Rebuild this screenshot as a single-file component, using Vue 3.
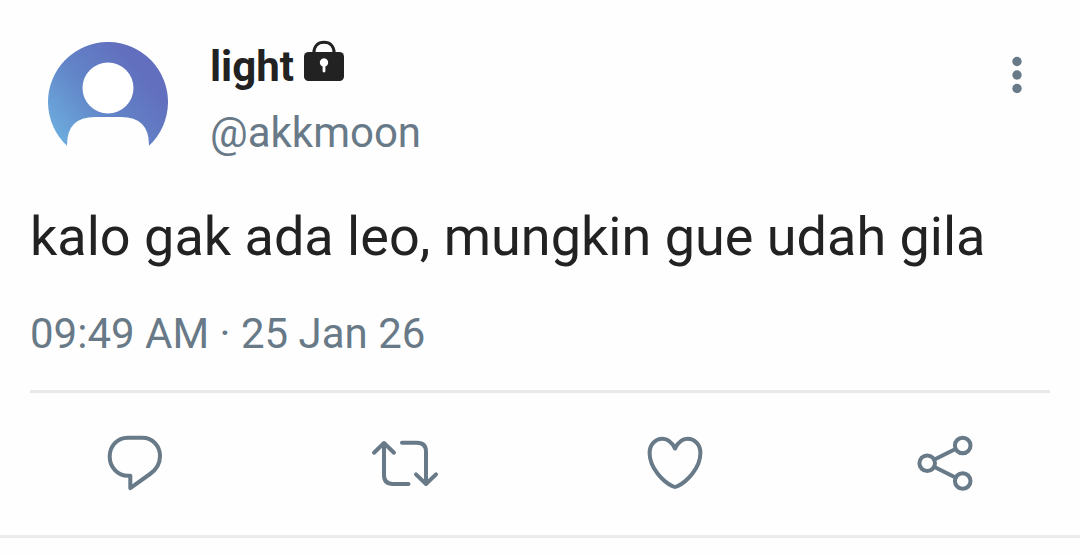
<script setup>
const post = {
  name: 'light',
  handle: '@akkmoon',
  text: 'kalo gak ada leo, mungkin gue udah gila',
  time: '09:49 AM · 25 Jan 26',
}

const actions = [
  {
    label: 'Reply',
    paths: [
      'M37.5 17.8H52.5C62.5 17.8 70 26 70 36C70 43.5 66.5 49.5 60 54L40.3 68.2V55.8H38C27.5 55.8 19.7 47 19.7 36.5C19.7 26 27.5 17.8 37.5 17.8Z',
    ],
  },
  {
    label: 'Repost',
    paths: [
      'M14 32.7L24 23L34 32.7M24 24V55Q24 64 33 64H48.5',
      'M42 22.8H57Q66 22.8 66 31.8V63M56 54.4L66 64L76 54.4',
    ],
  },
  {
    label: 'Like',
    paths: [
      'M45 28.5C42 22.5 37.5 18.8 32.5 18.8C25 18.8 19.6 25 19.6 33C19.6 48 33 61.5 42.6 66.3Q45 67.5 47.4 66.3C57 61.5 70.4 48 70.4 33C70.4 25 65 18.8 57.5 18.8C52.5 18.8 48 22.5 45 28.5Z',
    ],
  },
  {
    label: 'Share',
    paths: [
      'M34.5 39.5L55.5 29M34.5 47L55.5 57.5',
      'M19.4 43.2a7.8 7.8 0 1 0 15.6 0a7.8 7.8 0 1 0 -15.6 0Z',
      'M54.9 25.5a7.8 7.8 0 1 0 15.6 0a7.8 7.8 0 1 0 -15.6 0Z',
      'M54.9 61a7.8 7.8 0 1 0 15.6 0a7.8 7.8 0 1 0 -15.6 0Z',
    ],
  },
]
</script>

<template>
  <article class="post">
    <header class="head">
      <svg class="avatar" viewBox="0 0 120 120" aria-hidden="true">
        <defs>
          <linearGradient id="sky" x1="0" y1="0.8" x2="0.75" y2="0.25">
            <stop offset="0" stop-color="#6cabdd" />
            <stop offset="0.5" stop-color="#6285c8" />
            <stop offset="1" stop-color="#626fbe" />
          </linearGradient>
        </defs>
        <path d="M19 103.8A60 60 0 1 1 101 103.8V103Q101 75 73 75H47Q19 75 19 103Z" fill="url(#sky)" />
        <circle cx="60" cy="46" r="25.5" fill="#fff" />
      </svg>
      <div class="who">
        <div class="name">
          <span>{{ post.name }}</span>
          <svg class="lock" viewBox="0 0 40 42" aria-hidden="true">
            <path d="M9.8 13.5C9.8 6 14 2.2 20 2.2S30.2 6 30.2 13.5" fill="none" stroke="#222" stroke-width="3" />
            <rect y="12" width="40" height="29" rx="4.5" fill="#222" />
            <path d="M18.6 31.5V26.5A4.2 4.2 0 1 1 21.4 26.5V31.5Q20 33.5 18.6 31.5Z" fill="#fff" />
          </svg>
        </div>
        <div class="handle">{{ post.handle }}</div>
      </div>
      <button class="more" type="button" aria-label="More options">
        <svg viewBox="0 0 12 40" aria-hidden="true">
          <circle cx="6" cy="6.5" r="4.7" />
          <circle cx="6" cy="20" r="4.7" />
          <circle cx="6" cy="33.5" r="4.7" />
        </svg>
      </button>
    </header>

    <p class="text">{{ post.text }}</p>
    <time class="time">{{ post.time }}</time>
    <hr class="rule" />

    <div class="actions">
      <button v-for="a in actions" :key="a.label" class="action" type="button" :aria-label="a.label">
        <svg viewBox="0 0 90 90" aria-hidden="true">
          <path v-for="d in a.paths" :key="d" :d="d" />
        </svg>
      </button>
    </div>
  </article>
</template>

<style>
body {
  margin: 0;
  background: #fefefe;
}
</style>

<style scoped>
.post {
  padding-top: 42px;
  border-bottom: 3px solid #ebebeb;
  font-family: Roboto, sans-serif;
  color: #222;
}

.head {
  display: flex;
  align-items: flex-start;
  padding: 0 57px 0 48px;
}

.avatar {
  display: block;
  width: 120px;
  height: 120px;
  flex: none;
}

.who {
  flex: 1;
  margin-left: 42px;
}

.name {
  display: flex;
  align-items: center;
  gap: 10px;
  height: 50px;
  font-size: 42px;
  line-height: 50px;
  font-weight: 700;
}

.lock {
  width: 40px;
  height: 42px;
  margin-bottom: 12px;
}

.handle {
  margin-top: 16px;
  font-size: 42px;
  line-height: 50px;
  color: #687987;
}

.more {
  margin: 13px 0 0;
  padding: 0;
  border: 0;
  background: none;
  cursor: pointer;
}

.more svg {
  display: block;
  width: 12px;
  height: 40px;
  fill: #687987;
}

.text {
  margin: 43px 30px 0;
  font-size: 54px;
  line-height: 64px;
}

.time {
  display: block;
  margin: 40px 30px 0;
  font-size: 42px;
  line-height: 50px;
  color: #687987;
}

.rule {
  height: 3px;
  margin: 31px 30px 0;
  border: 0;
  background: #e8e8e8;
}

.actions {
  display: grid;
  grid-template-columns: repeat(4, 1fr);
  justify-items: center;
  padding: 27px 0 25px;
}

.action {
  padding: 0;
  border: 0;
  background: none;
  cursor: pointer;
}

.action svg {
  display: block;
  width: 90px;
  height: 90px;
  fill: none;
  stroke: #687987;
  stroke-width: 4;
  stroke-linecap: round;
  stroke-linejoin: round;
}
</style>
